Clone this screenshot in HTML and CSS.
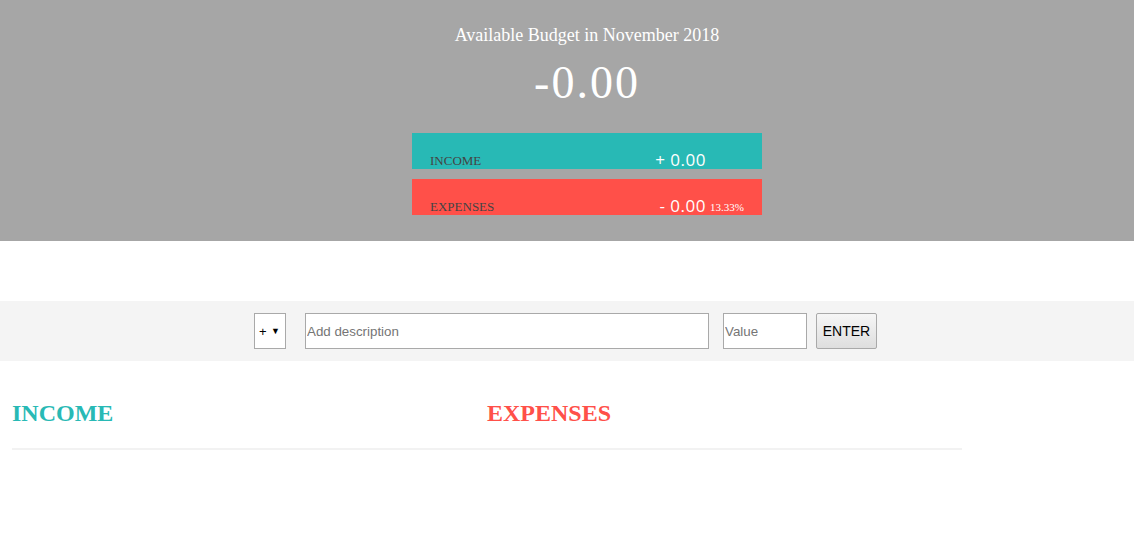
FILE: index.html
```html
<!DOCTYPE html>
<html lang="en">
<head>
<meta charset="utf-8">
<title>Budget</title>
<link rel="stylesheet" href="styles.css">
</head>
<body>
<header class="top">
  <div class="budget">
    <div class="budget-title">Available Budget in <span class="month">November 2018</span></div>
    <div class="budget-value">-0.00</div>
    <div class="summary summary-income">
      <div class="summary-text">Income</div>
      <div class="summary-right">
        <div class="summary-value">+ 0.00</div>
        <div class="summary-pct"></div>
      </div>
    </div>
    <div class="summary summary-expenses">
      <div class="summary-text">Expenses</div>
      <div class="summary-right">
        <div class="summary-value">- 0.00</div>
        <div class="summary-pct">13.33%</div>
      </div>
    </div>
  </div>
</header>

<section class="add">
  <div class="add-container">
    <div class="type-box">
      <select class="add-type">
        <option value="inc" selected>+</option>
        <option value="exp">-</option>
      </select>
      <span class="type-arrow">&#9660;</span>
    </div>
    <input type="text" class="add-description" placeholder="Add description">
    <input type="number" class="add-value" placeholder="Value">
    <button class="add-btn">ENTER</button>
  </div>
</section>

<main class="container">
  <div class="column">
    <h2 class="income-title">Income</h2>
  </div>
  <div class="column">
    <h2 class="expenses-title">Expenses</h2>
  </div>
</main>
</body>
</html>
```

FILE: styles.css
```css
* { box-sizing: border-box; }

body {
  margin: 0;
  font-family: "Liberation Serif", "Times New Roman", serif;
  color: #000;
  background: #fff;
}

.top {
  height: 241px;
  background-color: #a6a6a6;
  display: flex;
  justify-content: center;
  padding-top: 24px;
  padding-left: 40px;
}

.budget {
  width: 350px;
  color: #fff;
}

.budget-title {
  font-size: 18px;
  line-height: 22px;
  text-align: center;
}

.budget-value {
  font-size: 46px;
  line-height: 54px;
  letter-spacing: 2px;
  text-align: center;
  margin-top: 10px;
  margin-bottom: 23px;
}

.summary {
  height: 36px;
  display: flex;
  justify-content: space-between;
  align-items: flex-end;
  padding: 0 12px 0 18px;
}

.summary-income {
  background-color: #28b9b5;
  margin-bottom: 10px;
}

.summary-expenses {
  background-color: #ff5049;
}

.summary-text {
  font-size: 13px;
  line-height: 16px;
  color: #444;
  text-transform: uppercase;
}

.summary-right {
  display: flex;
  align-items: flex-end;
}

.summary-value {
  font-family: "Open Sans", "Liberation Sans", sans-serif;
  font-size: 17px;
  line-height: 18px;
  letter-spacing: 0.5px;
}

.summary-pct {
  width: 40px;
  margin-left: 4px;
  font-size: 11px;
  line-height: 16px;
  color: #fff;
}

.add {
  margin-top: 60px;
  height: 60px;
  background-color: #f4f4f4;
  display: flex;
  align-items: center;
  justify-content: center;
}

.add-container {
  display: flex;
  align-items: center;
  margin-right: 3px;
}

.type-box {
  width: 32px;
  height: 36px;
  border: 1px solid #a9a9a9;
  background: #fff;
  display: flex;
  align-items: center;
  padding-left: 4px;
  margin-right: 19px;
  font-family: "Liberation Sans", Arial, sans-serif;
}

.add-type {
  appearance: none;
  -webkit-appearance: none;
  border: none;
  background: transparent;
  font-family: "Liberation Sans", Arial, sans-serif;
  font-size: 13px;
  padding: 0;
  width: 12px;
  color: #000;
}

.type-arrow {
  font-size: 9px;
  color: #000;
}

.add-description,
.add-value {
  height: 36px;
  border: 1px solid #a9a9a9;
  background: #fff;
  padding: 0 1px;
  font-family: "Liberation Sans", Arial, sans-serif;
  font-size: 13.33px;
  color: #000;
  border-radius: 0;
}

.add-description::placeholder,
.add-value::placeholder {
  color: #757575;
}

.add-description {
  width: 404px;
  margin-right: 14px;
}

.add-value {
  width: 84px;
  margin-right: 9px;
  -moz-appearance: textfield;
}

.add-value::-webkit-outer-spin-button,
.add-value::-webkit-inner-spin-button {
  -webkit-appearance: none;
  margin: 0;
}

.add-btn {
  width: 61px;
  height: 36px;
  border: 1px solid #a9a9a9;
  border-radius: 2px;
  background: linear-gradient(#f6f6f6, #dedede);
  font-family: "Liberation Sans", Arial, sans-serif;
  font-size: 14px;
  color: #000;
  padding: 0;
}

.container {
  width: 950px;
  margin-left: 12px;
  margin-top: 38px;
  display: flex;
  border-bottom: 2px solid #f2f2f2;
  padding-bottom: 21px;
}

.column {
  width: 475px;
}

h2 {
  margin: 0;
  font-size: 24px;
  line-height: 28px;
  font-weight: bold;
  text-transform: uppercase;
}

.income-title { color: #28b9b5; }
.expenses-title { color: #ff5049; }
```
